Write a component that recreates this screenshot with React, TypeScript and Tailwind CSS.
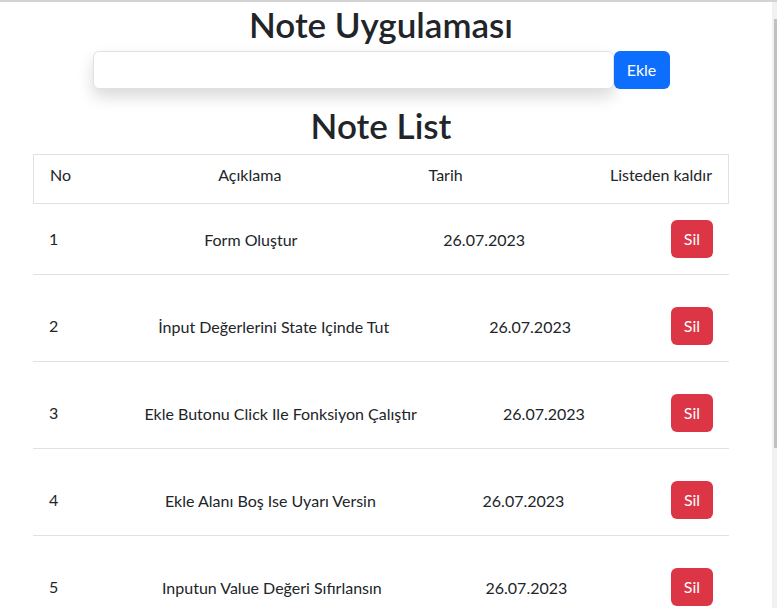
const notes = [
  { no: 1, text: 'Form Oluştur', date: '26.07.2023' },
  { no: 2, text: 'İnput Değerlerini State Içinde Tut', date: '26.07.2023' },
  { no: 3, text: 'Ekle Butonu Click Ile Fonksiyon Çalıştır', date: '26.07.2023' },
  { no: 4, text: 'Ekle Alanı Boş Ise Uyarı Versin', date: '26.07.2023' },
  { no: 5, text: 'Inputun Value Değeri Sıfırlansın', date: '26.07.2023' },
];

export default function App() {
  return (
    <div className="h-[608px] overflow-hidden bg-white text-[#212529] text-base leading-6 font-['Lato','Liberation_Sans',sans-serif] flex flex-col">
      <div className="h-[2px] bg-[#d3d3d3] shrink-0" />
      <div className="flex flex-1 min-h-0">
        <main className="w-[762px] shrink-0 px-[33px] pt-[2px]">
          <h1 className="text-center text-[35px] leading-[40px] font-semibold">Note Uygulaması</h1>
          <div className="mt-[7px] mx-auto w-[577px] flex">
            <input
              type="text"
              className="h-[38px] flex-1 rounded-md border border-[#dee2e6] bg-white shadow-[0_8px_16px_rgba(0,0,0,0.15)] outline-none px-3"
            />
            <button className="h-[38px] w-[56px] rounded-md bg-[#0d6efd] text-white">Ekle</button>
          </div>
          <h1 className="mt-[16px] text-center text-[35px] leading-[40px] font-semibold">Note List</h1>
          <div className="mt-[9px]">
            <div className="h-[50px] border border-[#dee2e6] flex items-center justify-between px-4 pb-[8px]">
              <span>No</span>
              <span>Açıklama</span>
              <span>Tarih</span>
              <span>Listeden kaldır</span>
            </div>
            {notes.map((n, i) => (
              <div
                key={n.no}
                className={`flex items-center justify-between px-4 border-b border-[#dee2e6] ${i === 0 ? 'py-4' : 'pt-8 pb-4'}`}
              >
                <span>{n.no}</span>
                <span className="pt-[2px]">{n.text}</span>
                <span className="pt-[2px]">{n.date}</span>
                <button className="h-[38px] w-[42px] rounded-md bg-[#dc3545] text-white">Sil</button>
              </div>
            ))}
          </div>
        </main>
        <div className="w-[15px] flex shrink-0">
          <div className="w-[10px] bg-white" />
          <div className="w-[5px] bg-[#f1f1f1] pt-[17px] flex justify-end">
            <div className="w-[3px] h-[429px] bg-[#c1c1c1]" />
          </div>
        </div>
      </div>
    </div>
  );
}
